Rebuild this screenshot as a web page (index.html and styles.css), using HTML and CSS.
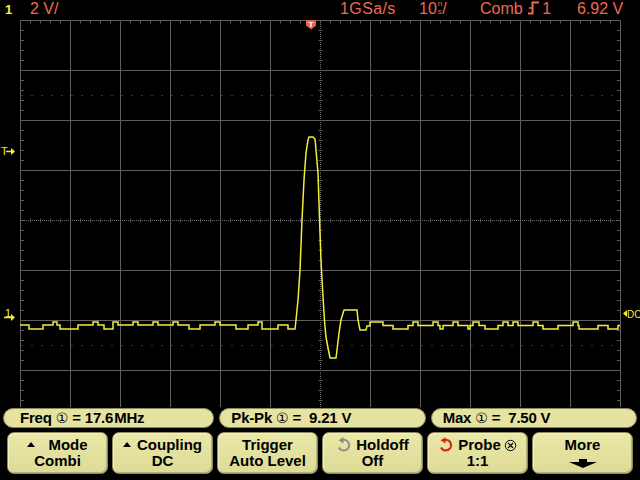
FILE: index.html
```html
<!DOCTYPE html>
<html lang="en">
<head>
    <meta charset="UTF-8">
    <title>Scope - Channel 1</title>
    <link rel="stylesheet" href="styles.css">
</head>
<body>
    <div class="scope">
        <!-- status line: channel scale, sample rate, timebase, trigger -->
        <div class="status">
            <span class="ch">1</span>
            <span class="scale">2 V/</span>
            <span class="srate">1GSa/s</span>
            <span class="tbase">10<span class="unit"><span>n</span><span>s</span></span>/</span>
            <span class="trig">Comb <svg class="slope" width="12" height="14" viewBox="0 0 12 14"><path d="M0 12.5H4.5V1.5H11" fill="none" stroke="#ee6a50" stroke-width="2"/><path d="M1 7H4" stroke="#ee6a50" stroke-width="1.5"/></svg>1</span>
            <span class="level">6.92 V</span>
        </div>

        <svg class="screen" width="640" height="387" viewBox="0 20 640 387">
            <!-- graticule -->
            <path class="grid" d="M20.5 20V420M70.5 20V420M120.5 20V420M170.5 20V420M220.5 20V420M270.5 20V420M370.5 20V420M420.5 20V420M470.5 20V420M520.5 20V420M570.5 20V420M620.5 20V420
                M20 20.5H621M20 70.5H621M20 120.5H621M20 170.5H621M20 270.5H621M20 320.5H621M20 370.5H621M20 420.5H621"/>
            <path class="dots" d="M20 220.5H620M320.5 20V420"/>
            <path class="ticks-v" d="M20 220.5H620M20 21.5H620"/>
            <path class="ticks-h" d="M320.5 20V420M22 20V420M619 20V420"/>
            <path class="faint" d="M20 95.5H620M20 345.5H620"/>

            <!-- trigger position marker -->
            <path class="trig-mark" d="M306 20H316V25.5L311 29.5L306 25.5Z"/>
            <text class="trig-t" x="311" y="27" text-anchor="middle">T</text>

            <!-- side markers: trigger level, channel ground, coupling -->
            <text class="marker" x="1" y="155">T</text>
            <path class="marker-line" d="M6 151.5H12"/>
            <path class="marker-head" d="M11 148L15 151.5L11 155Z"/>
            <text class="marker" x="5" y="317">1</text>
            <path class="marker-line" d="M4 317.5H12"/>
            <path class="marker-head" d="M11 314L15 317.5L11 321Z"/>
            <path class="marker-head" d="M627 310L623 313.5L627 317Z"/>
            <text class="marker dc" x="627" y="318">DC</text>

            <!-- channel 1 trace -->
            <path class="trace" d="M20 325H29V329H43V325H53V322H57V325H60V329H78V325H93V322H98V325H104V329H113V322H118V325H133V322H138V325H153V322H158V325H173V322H178V325H189V329H200V325H215V322H220V325H236V329H248V325H258V322H262V329H278V325H288V329H295
                L296 320L298 300L300 270L302 220L304 180L306 153L308 140L309 137H313L315 139L316 150L318 173L320 233L321 260L322 280L324 313L325 327L326 337L328 348L330 358H336L337 350L339 333L341 320L344 310H357L358 320L360 330H366L367 326H370V322
                H383V325.5H393V329H408V325.5H413V322H418V325.5H433V322H438V325.5H440V329H443V325.5H453V322H458V325.5H468V329H470V325.5H473V322H479V325.5H485V329H498V325.5H503V322H508V325.5H513V322H518V325.5H533V322H538V325.5H543V329H558V325.5H573V322H578V325.5H579V329H598V325.5H608V329H618V325.5H620"/>
        </svg>

        <!-- automatic measurements -->
        <div class="meas">
            <div class="pill freq">Freq <span class="circ">①</span> = 17.6&#8202;MHz</div>
            <div class="pill">Pk-Pk <span class="circ">①</span> =  9.21 V</div>
            <div class="pill">Max <span class="circ">①</span> =  7.50 V</div>
        </div>

        <!-- softkeys -->
        <div class="keys">
            <div class="key">
                <span><i class="up wide"></i>Mode</span>
                <span>Combi</span>
            </div>
            <div class="key">
                <span><i class="up"></i>Coupling</span>
                <span>DC</span>
            </div>
            <div class="key">
                <span>Trigger</span>
                <span>Auto Level</span>
            </div>
            <div class="key">
                <span class="row"><svg class="knob" width="16" height="16" viewBox="0 0 16 16"><path d="M6.5 3A5.3 5.3 0 1 1 3 10.5" fill="none" stroke="#8e8e86" stroke-width="2"/><path d="M2.5 3.2L7.5 0.2V6.4Z" fill="#8e8e86"/></svg>Holdoff</span>
                <span>Off</span>
            </div>
            <div class="key">
                <span class="row"><svg class="knob" width="16" height="16" viewBox="0 0 16 16"><path d="M6.5 3A5.3 5.3 0 1 1 3 10.5" fill="none" stroke="#e0240e" stroke-width="2.2"/><path d="M2.5 3.2L7.5 0.2V6.4Z" fill="#e0240e"/></svg>Probe<svg class="xmark" width="13" height="13" viewBox="0 0 13 13"><circle cx="6.5" cy="6.5" r="5.2" fill="none" stroke="#000" stroke-width="1"/><path d="M4 4L9 9M9 4L4 9" stroke="#000" stroke-width="1.2"/></svg></span>
                <span>1:1</span>
            </div>
            <div class="key more">
                <span>More</span>
                <svg class="down" width="28" height="9" viewBox="0 0 28 9"><path d="M10 0H18V3H28L14 9L0 3H10Z" fill="#000"/></svg>
            </div>
        </div>
    </div>
</body>
</html>
```

FILE: styles.css
```css
body {
    margin: 0;
    background: #000;
    font-family: "Liberation Sans", Arial, sans-serif;
}

.scope {
    width: 640px;
    height: 480px;
    background: #000;
    overflow: hidden;
}

/* top status line */
.status {
    display: flex;
    height: 20px;
    font-size: 16px;
    line-height: 17px;
    color: #ee6a50;
    white-space: nowrap;
}

.status > span {
    flex: none;
}

.ch {
    width: 30px;
    padding-left: 5px;
    box-sizing: border-box;
    color: #f4f030;
    font-weight: bold;
    font-size: 13px;
    line-height: 19px;
}

.scale {
    width: 310px;
}

.srate {
    width: 79px;
    letter-spacing: 0.4px;
}

.tbase {
    width: 61px;
    display: flex;
    align-items: flex-start;
}

.unit {
    display: inline-flex;
    flex-direction: column;
    font-size: 8px;
    line-height: 8px;
    margin-top: 0;
    margin-left: 1px;
}

.trig {
    width: 97px;
}

.slope {
    margin: 0 2px 0 1px;
    vertical-align: -1px;
}

/* scope display */
.screen {
    display: block;
}

.grid {
    fill: none;
    stroke: #5e5e5e;
    stroke-width: 1;
}

.dots {
    fill: none;
    stroke: #6a6a6a;
    stroke-width: 1;
    stroke-dasharray: 1 1;
}

.ticks-v {
    fill: none;
    stroke: #5a5a5a;
    stroke-width: 4;
    stroke-dasharray: 1 9;
}

.ticks-h {
    fill: none;
    stroke: #5a5a5a;
    stroke-width: 4;
    stroke-dasharray: 1 9;
}

.faint {
    fill: none;
    stroke: #333;
    stroke-width: 1;
    stroke-dasharray: 2 8;
    stroke-dashoffset: -1;
}

.trig-mark {
    fill: #e8604a;
}

.trig-t {
    fill: #fff;
    font-size: 8px;
    font-weight: bold;
}

.marker {
    fill: #f4f030;
    font-size: 11px;
}

.marker.dc {
    font-size: 10px;
}

.marker-line {
    stroke: #f4f030;
    stroke-width: 1.5;
}

.marker-head {
    fill: #f4f030;
}

.trace {
    fill: none;
    stroke: #f2ee3c;
    stroke-width: 1.5;
    stroke-linejoin: miter;
}

/* measurement readouts */
.meas {
    display: flex;
    gap: 5px;
    padding: 0 3px;
    margin-top: 1px;
}

.pill {
    flex: 1;
    height: 20px;
    box-sizing: border-box;
    padding-left: 11px;
    border: 1px solid #8c8a5c;
    border-radius: 10px;
    background: #e5e39f;
    color: #000;
    font-size: 15px;
    font-weight: bold;
    line-height: 18px;
    white-space: pre;
    letter-spacing: -0.2px;
}

.pill.freq {
    padding-left: 16px;
}

.circ {
    font-family: "DejaVu Sans", sans-serif;
    font-weight: normal;
    font-size: 14px;
    letter-spacing: 0;
}

/* softkeys */
.keys {
    display: flex;
    gap: 4px;
    padding: 0 7px;
    margin-top: 4px;
}

.key {
    flex: 1;
    height: 42px;
    box-sizing: border-box;
    display: flex;
    flex-direction: column;
    align-items: center;
    justify-content: center;
    border: 1px solid #8c8a5c;
    border-radius: 7px;
    background: linear-gradient(#eae8a8, #dedb98);
    box-shadow: inset 1px 1px 0 #f4f2c2, inset -1px -1px 0 #b4b27c;
    color: #000;
    font-size: 15px;
    font-weight: bold;
    line-height: 16px;
    white-space: nowrap;
}

.key.more {
    justify-content: flex-start;
    padding-top: 4px;
}

.key .row {
    display: flex;
    align-items: center;
}

.up {
    display: inline-block;
    width: 0;
    height: 0;
    border-left: 4px solid transparent;
    border-right: 4px solid transparent;
    border-bottom: 5px solid #000;
    margin-right: 6px;
    vertical-align: 3px;
}

.up.wide {
    margin-right: 13px;
}

.knob {
    margin-right: 4px;
}

.xmark {
    margin-left: 3px;
}

.down {
    display: block;
    margin-top: 6px;
}
```
